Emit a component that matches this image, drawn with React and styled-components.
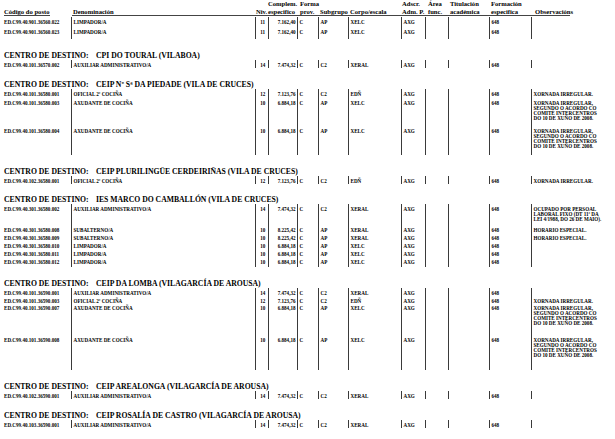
import React from 'react';
import styled, { createGlobalStyle } from 'styled-components';

const GlobalStyle = createGlobalStyle`
  html, body {
    margin: 0;
    padding: 0;
    background: #fff;
  }
  body {
    font-family: "Liberation Serif", "Times New Roman", serif;
    color: #000;
  }
`;

const COLS = '67px 184px 13px 29px 21px 30px 53px 24px 23px 41px 42px 60px';

const Page = styled.div`
  width: 615px;
  height: 439px;
  overflow: hidden;
  padding-left: 4px;
  box-sizing: border-box;
`;

const HeaderRow = styled.div`
  display: grid;
  grid-template-columns: ${COLS};
  height: 16px;
  margin-bottom: 1px;
`;

const HeaderCell = styled.div`
  display: flex;
  flex-direction: column;
  justify-content: flex-end;
  padding-left: ${(p) => p.pad || 0}px;
  margin-left: ${(p) => p.ml || 0}px;
  margin-right: ${(p) => p.mr || 0}px;
  font-size: 6.6px;
  font-weight: bold;
  line-height: 7.5px;
  white-space: nowrap;
  border-bottom: 1px solid #444;
`;

const Heading = styled.div`
  display: flex;
  margin-top: 12px;
  height: 9px;
  line-height: 9px;
  font-size: 7.7px;
  font-weight: bold;
  white-space: nowrap;
`;

const HeadingLabel = styled.span`
  width: 92px;
`;

const Row = styled.div`
  display: grid;
  grid-template-columns: ${COLS};
  height: ${(p) => p.h}px;
  font-size: 5.1px;
  font-weight: bold;
  line-height: 5px;
`;

const Cell = styled.div`
  border-left: ${(p) => (p.first ? 'none' : '1px solid #3a3a3a')};
  padding: 3px ${(p) => (p.align === 'right' ? 1.5 : 0)}px 0 ${(p) => (p.first ? 0 : 1.5)}px;
  text-align: ${(p) => p.align || 'left'};
  white-space: nowrap;
  overflow: visible;
`;

const ObsLine = styled.div`
  white-space: nowrap;
`;

const XORNADA_LONG = [
  'XORNADA IRREGULAR,',
  'SEGUNDO O ACORDO CO',
  'COMITÉ INTERCENTROS',
  'DO 10 DE XUÑO DE 2008.',
];
const XORNADA = ['XORNADA IRREGULAR.'];
const HORARIO = ['HORARIO ESPECIAL.'];
const OCUPADO = ['OCUPADO POR PERSOAL', 'LABORAL FIXO (DT 11ª DA', 'LEI 4/1988, DO 26 DE MAIO).'];

const LIMP = { den: 'LIMPADOR/A', niv: '11', comp: '7.162,40', sub: 'AP', corpo: 'XELC' };
const LIMP10 = { den: 'LIMPADOR/A', niv: '10', comp: '6.884,18', sub: 'AP', corpo: 'XELC' };
const AUX = { den: 'AUXILIAR ADMINISTRATIVO/A', niv: '14', comp: '7.474,32', sub: 'C2', corpo: 'XERAL' };
const OFI = { den: 'OFICIAL 2ª COCIÑA', niv: '12', comp: '7.123,76', sub: 'C2', corpo: 'EDÑ' };
const AXU = { den: 'AXUDANTE DE COCIÑA', niv: '10', comp: '6.884,18', sub: 'AP', corpo: 'XELC' };
const SUB = { den: 'SUBALTERNO/A', niv: '10', comp: '8.225,42', sub: 'AP', corpo: 'XERAL' };

const sections = [
  {
    title: null,
    rows: [
      { code: 'ED.C99.40.901.36560.022', ...LIMP, h: 10 },
      { code: 'ED.C99.40.901.36560.023', ...LIMP, h: 11.5 },
    ],
  },
  {
    title: 'CPI DO TOURAL (VILABOA)',
    rows: [{ code: 'ED.C99.40.101.36570.002', ...AUX, h: 8 }],
  },
  {
    title: 'CEIP Nº Sª DA PIEDADE (VILA DE CRUCES)',
    rows: [
      { code: 'ED.C99.40.101.36580.001', ...OFI, obs: XORNADA, h: 9 },
      { code: 'ED.C99.40.101.36580.003', ...AXU, obs: XORNADA_LONG, h: 28 },
      { code: 'ED.C99.40.101.36580.004', ...AXU, obs: XORNADA_LONG, h: 29 },
    ],
  },
  {
    title: 'CEIP PLURILINGÜE CERDEIRIÑAS (VILA DE CRUCES)',
    rows: [{ code: 'ED.C99.40.102.36580.001', ...OFI, obs: XORNADA, h: 7 }],
  },
  {
    title: 'IES MARCO DO CAMBALLÓN (VILA DE CRUCES)',
    rows: [
      { code: 'ED.C99.40.301.36580.002', ...AUX, obs: OCUPADO, h: 21 },
      { code: 'ED.C99.40.301.36580.008', ...SUB, obs: HORARIO, h: 8 },
      { code: 'ED.C99.40.301.36580.009', ...SUB, obs: HORARIO, h: 8 },
      { code: 'ED.C99.40.301.36580.010', ...LIMP10, h: 8 },
      { code: 'ED.C99.40.301.36580.011', ...LIMP10, h: 8 },
      { code: 'ED.C99.40.301.36580.012', ...LIMP10, h: 10 },
    ],
  },
  {
    title: 'CEIP DA LOMBA (VILAGARCÍA DE AROUSA)',
    rows: [
      { code: 'ED.C99.40.101.36590.001', ...AUX, h: 8 },
      { code: 'ED.C99.40.101.36590.003', ...OFI, obs: XORNADA, h: 7.5 },
      { code: 'ED.C99.40.101.36590.007', ...AXU, obs: XORNADA_LONG, h: 32 },
      { code: 'ED.C99.40.101.36590.008', ...AXU, obs: XORNADA_LONG, h: 34.5 },
    ],
  },
  {
    title: 'CEIP AREALONGA (VILAGARCÍA DE AROUSA)',
    rows: [{ code: 'ED.C99.40.102.36590.001', ...AUX, h: 8 }],
  },
  {
    title: 'CEIP ROSALÍA DE CASTRO (VILAGARCÍA DE AROUSA)',
    rows: [{ code: 'ED.C99.40.103.36590.001', ...AUX, h: 8 }],
  },
];

function Header() {
  return (
    <HeaderRow>
      <HeaderCell mr={21}>Código do posto</HeaderCell>
      <HeaderCell pad={1} ml={1}>Denominación</HeaderCell>
      <HeaderCell pad={1}>Niv.</HeaderCell>
      <HeaderCell>
        <span>Complem.</span>
        <span>especifico</span>
      </HeaderCell>
      <HeaderCell pad={3}>
        <span>Forma</span>
        <span>prov.</span>
      </HeaderCell>
      <HeaderCell pad={2}>Subgrupo</HeaderCell>
      <HeaderCell pad={2}>Corpo/escala</HeaderCell>
      <HeaderCell pad={1}>
        <span>Adscr.</span>
        <span>Adm. P.</span>
      </HeaderCell>
      <HeaderCell pad={3}>
        <span>Área</span>
        <span>func.</span>
      </HeaderCell>
      <HeaderCell pad={2}>
        <span>Titulación</span>
        <span>académica</span>
      </HeaderCell>
      <HeaderCell pad={2}>
        <span>Formación</span>
        <span>especifica</span>
      </HeaderCell>
      <HeaderCell pad={4} mr={21}>Observacións</HeaderCell>
    </HeaderRow>
  );
}

function PostRow({ row }) {
  return (
    <Row h={row.h}>
      <Cell first>{row.code}</Cell>
      <Cell>{row.den}</Cell>
      <Cell align="center">{row.niv}</Cell>
      <Cell align="right">{row.comp}</Cell>
      <Cell>C</Cell>
      <Cell>{row.sub}</Cell>
      <Cell>{row.corpo}</Cell>
      <Cell>AXG</Cell>
      <Cell />
      <Cell />
      <Cell>648</Cell>
      <Cell>
        {(row.obs || []).map((line) => (
          <ObsLine key={line}>{line}</ObsLine>
        ))}
      </Cell>
    </Row>
  );
}

export default function App() {
  return (
    <Page>
      <GlobalStyle />
      <Header />
      {sections.map((sec, i) => (
        <div key={i}>
          {sec.title && (
            <Heading>
              <HeadingLabel>CENTRO DE DESTINO:</HeadingLabel>
              <span>{sec.title}</span>
            </Heading>
          )}
          {sec.rows.map((row) => (
            <PostRow key={row.code} row={row} />
          ))}
        </div>
      ))}
    </Page>
  );
}
